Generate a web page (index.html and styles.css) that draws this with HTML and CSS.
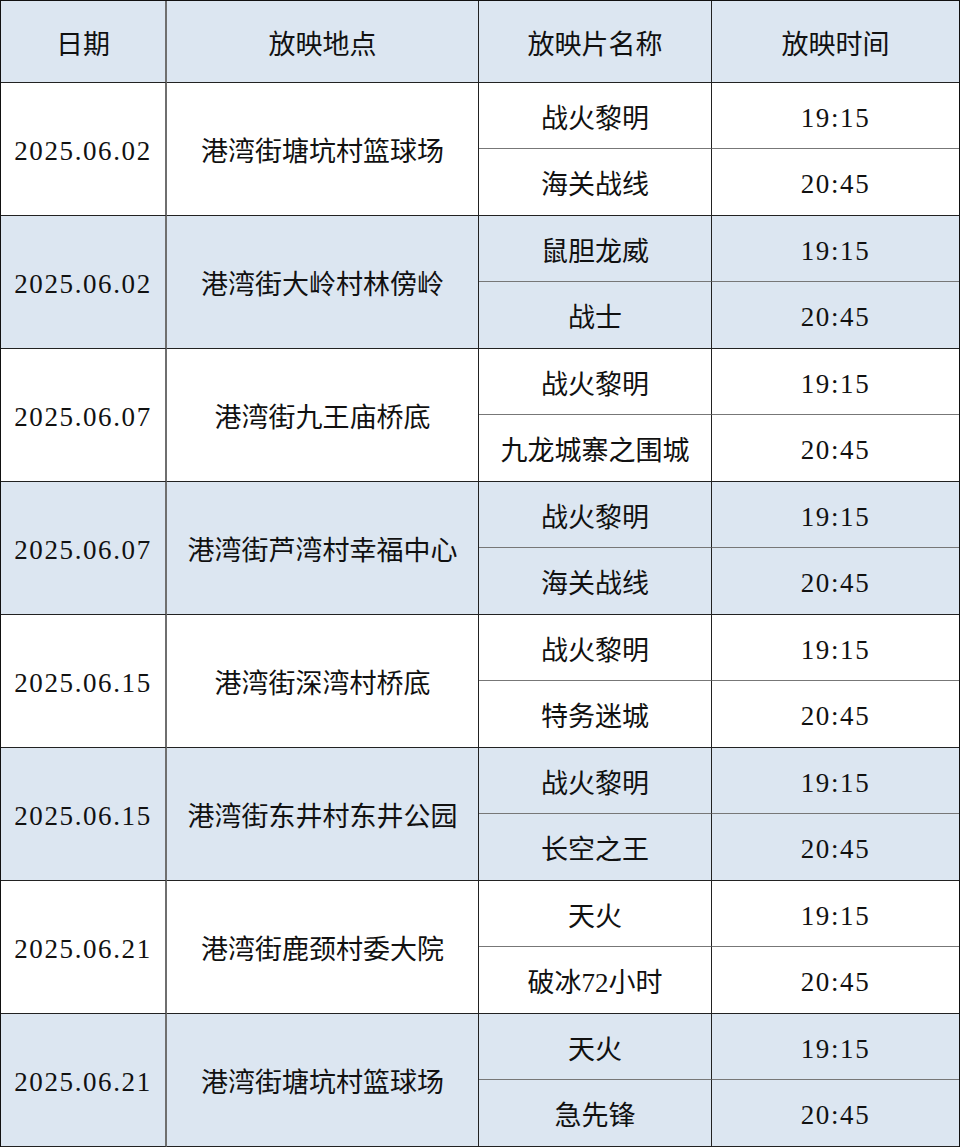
FILE: index.html
```html
<!DOCTYPE html>
<html lang="zh-CN">
<head>
<meta charset="utf-8">
<title>放映安排</title>
<link rel="stylesheet" href="styles.css">
</head>
<body>
<div class="table">
  <div class="cell head date">日期</div>
  <div class="cell head">放映地点</div>
  <div class="cell head">放映片名称</div>
  <div class="cell head last">放映时间</div>

  <div class="cell span num date">2025.06.02</div>
  <div class="cell span">港湾街塘坑村篮球场</div>
  <div class="cell sub">战火黎明</div>
  <div class="cell sub num last">19:15</div>
  <div class="cell">海关战线</div>
  <div class="cell num last">20:45</div>

  <div class="cell span num date alt">2025.06.02</div>
  <div class="cell span alt">港湾街大岭村林傍岭</div>
  <div class="cell sub alt">鼠胆龙威</div>
  <div class="cell sub num last alt">19:15</div>
  <div class="cell alt">战士</div>
  <div class="cell num last alt">20:45</div>

  <div class="cell span num date">2025.06.07</div>
  <div class="cell span">港湾街九王庙桥底</div>
  <div class="cell sub">战火黎明</div>
  <div class="cell sub num last">19:15</div>
  <div class="cell">九龙城寨之围城</div>
  <div class="cell num last">20:45</div>

  <div class="cell span num date alt">2025.06.07</div>
  <div class="cell span alt">港湾街芦湾村幸福中心</div>
  <div class="cell sub alt">战火黎明</div>
  <div class="cell sub num last alt">19:15</div>
  <div class="cell alt">海关战线</div>
  <div class="cell num last alt">20:45</div>

  <div class="cell span num date">2025.06.15</div>
  <div class="cell span">港湾街深湾村桥底</div>
  <div class="cell sub">战火黎明</div>
  <div class="cell sub num last">19:15</div>
  <div class="cell">特务迷城</div>
  <div class="cell num last">20:45</div>

  <div class="cell span num date alt">2025.06.15</div>
  <div class="cell span alt">港湾街东井村东井公园</div>
  <div class="cell sub alt">战火黎明</div>
  <div class="cell sub num last alt">19:15</div>
  <div class="cell alt">长空之王</div>
  <div class="cell num last alt">20:45</div>

  <div class="cell span num date">2025.06.21</div>
  <div class="cell span">港湾街鹿颈村委大院</div>
  <div class="cell sub">天火</div>
  <div class="cell sub num last">19:15</div>
  <div class="cell">破冰72小时</div>
  <div class="cell num last">20:45</div>

  <div class="cell span num date alt">2025.06.21</div>
  <div class="cell span alt">港湾街塘坑村篮球场</div>
  <div class="cell sub alt">天火</div>
  <div class="cell sub num last alt">19:15</div>
  <div class="cell alt">急先锋</div>
  <div class="cell num last alt">20:45</div>
</div>
</body>
</html>
```

FILE: styles.css
```css
* { box-sizing: border-box; }
html, body { margin: 0; padding: 0; background: #ffffff; }
body {
  font-family: "Liberation Serif", "Noto Sans CJK SC", serif;
  color: #111;
}
.table {
  width: 960px;
  display: grid;
  grid-template-columns: 166px 312px 233px 1fr;
  grid-template-rows: 82px repeat(8, 66px 67px);
  border-top: 1px solid #111;
  border-left: 1px solid #111;
  border-right: 1px solid #111;
}
.cell {
  display: flex;
  align-items: center;
  justify-content: center;
  padding-top: 7px;
  font-size: 27px;
  line-height: 1;
  border-bottom: 1px solid #222;
  border-right: 1px solid #222;
  background: #ffffff;
  white-space: nowrap;
}
.head { background: #dce6f1; }
.alt { background: #dce6f1; }
.span { grid-row: span 2; }
.date { border-right: 2px solid #6f6f6f; }
.sub { border-bottom: 1px solid #777; }
.last { border-right: none; }
.num { letter-spacing: 1.6px; padding-top: 5px; }
```
